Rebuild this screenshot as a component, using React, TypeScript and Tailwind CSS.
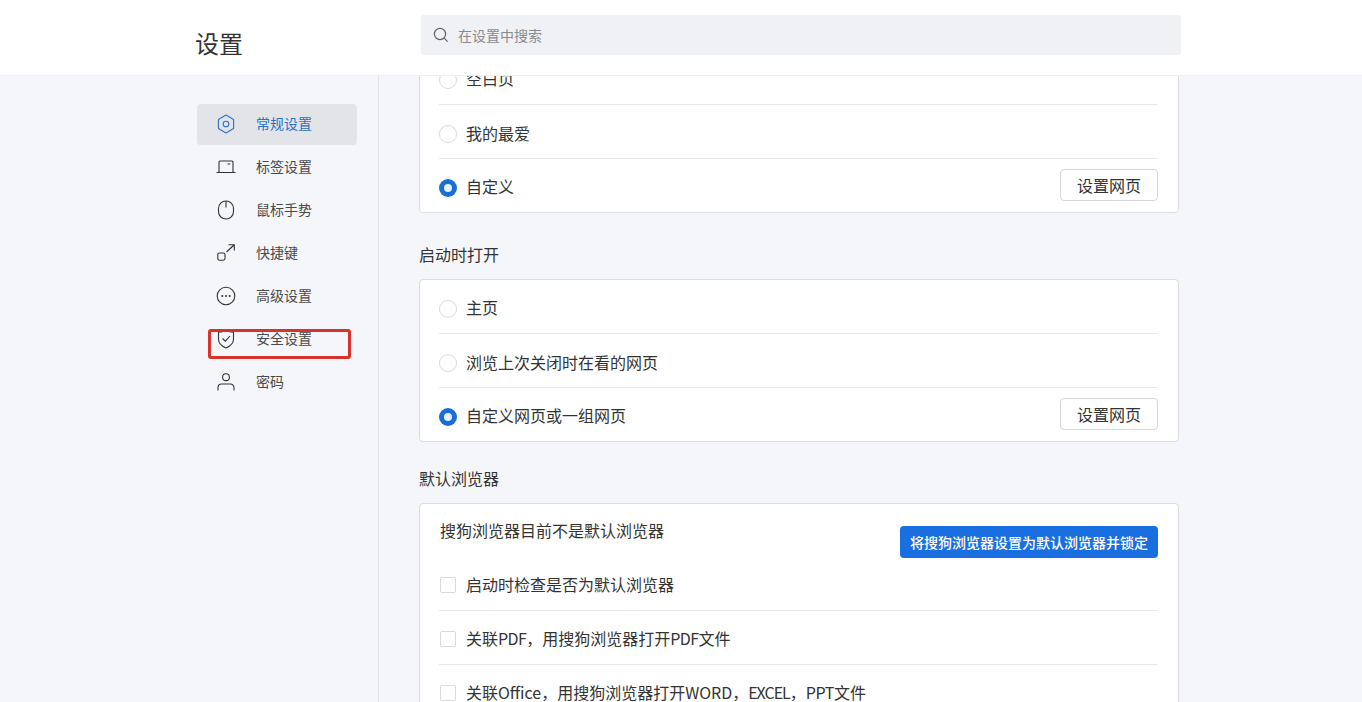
import React from "react";

const font = { fontFamily: '"Noto Sans CJK SC", "Noto Sans", sans-serif' };

const S = "currentColor";
const icons: Record<string, React.ReactNode> = {
  general: (
    <>
      <path d="M10 1 17.6 5.5V14.5L10 19 2.4 14.5V5.5Z" fill="none" stroke={S} strokeWidth="1.1" strokeLinejoin="round" />
      <circle cx="10" cy="10" r="2.8" fill="none" stroke={S} strokeWidth="1.1" />
    </>
  ),
  tabs: (
    <>
      <path d="M3 15.5V5a1 1 0 0 1 1-1h12a1 1 0 0 1 1 1v10.5" fill="none" stroke={S} strokeWidth="1.1" />
      <path d="M0.5 15.5h19M11.5 7h2.8" fill="none" stroke={S} strokeWidth="1.1" />
    </>
  ),
  mouse: (
    <>
      <rect x="2.5" y="1" width="15" height="18" rx="7.5" fill="none" stroke={S} strokeWidth="1.1" />
      <path d="M10 1V7.5" fill="none" stroke={S} strokeWidth="1.1" />
    </>
  ),
  shortcut: (
    <>
      <rect x="1.8" y="10" width="7.2" height="7.2" rx="1.6" fill="none" stroke={S} strokeWidth="1.1" />
      <path d="M10.5 9 18 2M12.5 1.7H18.3V7.5" fill="none" stroke={S} strokeWidth="1.1" />
    </>
  ),
  advanced: (
    <>
      <circle cx="10" cy="10" r="8.8" fill="none" stroke={S} strokeWidth="1.1" />
      <circle cx="6.3" cy="10" r="1" fill={S} />
      <circle cx="10" cy="10" r="1" fill={S} />
      <circle cx="13.7" cy="10" r="1" fill={S} />
    </>
  ),
  security: (
    <>
      <path d="M10 1C12.5 2.6 15 3.2 17.5 3.3V10c0 4.2-3.2 7.2-7.5 9C5.7 17.2 2.5 14.2 2.5 10V3.3C5 3.2 7.5 2.6 10 1Z" fill="none" stroke={S} strokeWidth="1.1" strokeLinejoin="round" />
      <path d="M6.5 9.5 9.3 12.2 14 7" fill="none" stroke={S} strokeWidth="1.1" />
    </>
  ),
  password: (
    <>
      <circle cx="10" cy="5.2" r="3.4" fill="none" stroke={S} strokeWidth="1.1" />
      <path d="M2 18.5v-3a3.5 3.5 0 0 1 3.5-3.5h9a3.5 3.5 0 0 1 3.5 3.5v3" fill="none" stroke={S} strokeWidth="1.1" />
    </>
  ),
};

const nav = [
  ["general", "常规设置"],
  ["tabs", "标签设置"],
  ["mouse", "鼠标手势"],
  ["shortcut", "快捷键"],
  ["advanced", "高级设置"],
  ["security", "安全设置"],
  ["password", "密码"],
];

function Radio({ checked }: { checked?: boolean }) {
  return checked ? (
    <span className="w-[18px] h-[18px] mt-[2px] rounded-full bg-[#1a6dd8] flex items-center justify-center shrink-0">
      <span className="w-[8px] h-[8px] rounded-full bg-[#e4f1fd]" />
    </span>
  ) : (
    <span className="w-[18px] h-[18px] mt-[2px] rounded-full border border-[#d9dade] bg-white shrink-0" />
  );
}

function SetBtn() {
  return (
    <button className="ml-auto mb-[3px] w-[98px] h-[32px] border border-[#d5d6da] rounded-[4px] bg-white text-[16px] text-[#333333] flex items-center justify-center">
      设置网页
    </button>
  );
}

function Row({ label, checked, btn, last, up }: { label: string; checked?: boolean; btn?: boolean; last?: boolean; up?: boolean }) {
  return (
    <div className={`flex items-center gap-[9px] pt-[2px] ${last ? "h-[53px]" : "h-[54px] border-b border-[#e8e9ec]"}`}>
      <Radio checked={checked} />
      <span className={`text-[16px] text-[#333333] ${up ? "mb-[2px]" : ""}`}>{label}</span>
      {btn && <SetBtn />}
    </div>
  );
}

function CheckRow({ children, last, first }: { children: React.ReactNode; last?: boolean; first?: boolean }) {
  return (
    <div className={`flex items-center gap-[10px] shrink-0 ${first ? "h-[53px]" : "h-[54px]"} ${last ? "" : "border-b border-[#e8e9ec]"}`}>
      <span className="w-[16px] h-[16px] ml-px mt-[2px] rounded-[2px] border border-[#d9dade] bg-white shrink-0" />
      <span className="text-[16px] text-[#333333] whitespace-nowrap">{children}</span>
    </div>
  );
}

const card = "bg-white border border-[#dcdde1] rounded-[4px] pl-[19px] pr-[20px]";

export default function App() {
  return (
    <div className="w-[1362px] h-[702px] overflow-hidden flex flex-col bg-[#f5f6fa]" style={font}>
      <header className="h-[76px] shrink-0 bg-white border-b border-[#eeeff2] flex relative z-10">
        <div className="w-[379px] shrink-0 pl-[195px] pt-[25px] text-[24px] leading-[36px] text-[#333333]">设置</div>
        <div className="ml-[42px] mt-[15px] w-[760px] h-[40px] rounded-[3px] bg-[#f0f1f5] flex items-center pl-[12px] text-[14px] text-[#888a8e]">
          <svg width="16" height="16" viewBox="0 0 16 16" fill="none" stroke="#5f6165" strokeWidth="1.2" className="mr-[9px]">
            <circle cx="7" cy="7" r="5.6" />
            <path d="M11.2 11.2 14.6 14.6" />
          </svg>
          在设置中搜索
        </div>
      </header>

      <div className="flex-1 min-h-0 flex">
        <aside className="w-[379px] shrink-0 border-r border-[#e3e4e8] pl-[197px] pt-[28px] relative">
          <nav className="w-[160px] flex flex-col gap-[2px]">
            {nav.map(([id, label], i) => (
              <div
                key={id}
                className={`h-[41px] flex items-center pl-[19px] pb-[2px] rounded-[4px] text-[14px] ${
                  i === 0 ? "bg-[#e3e4e7] text-[#2a72c8]" : "text-[#4a4a4a]"
                }`}
              >
                <svg width="20" height="20" viewBox="0 0 20 20" className={`mr-[20px] shrink-0 ${i === 0 ? "text-[#2f72c4]" : "text-[#333333]"}`}>
                  {icons[id]}
                </svg>
                {label}
              </div>
            ))}
          </nav>
          <div className="absolute left-[208px] top-[253px] w-[143px] h-[30px] border-[3px] border-[#d8322c] rounded-[3px]" />
        </aside>

        <main className="flex-1 min-w-0 overflow-hidden pl-[40px]">
          <div className="w-[760px] -mt-[26px]">
            <section className={card}>
              <Row up label="空白页" />
              <Row label="我的最爱" />
              <Row up label="自定义" checked btn last />
            </section>
            <h2 className="h-[66px] pt-[29px] text-[16px] leading-[24px] font-normal text-[#333333]">启动时打开</h2>
            <section className={card}>
              <Row up label="主页" />
              <Row label="浏览上次关闭时在看的网页" />
              <Row up label="自定义网页或一组网页" checked btn last />
            </section>
            <h2 className="h-[61px] pt-[24px] text-[16px] leading-[24px] font-normal text-[#333333]">默认浏览器</h2>
            <section className={`${card} h-[300px]`}>
              <div className="flex justify-between pt-[13px] h-[54px]">
                <span className="ml-px text-[16px] leading-[26px] text-[#333333]">搜狗浏览器目前不是默认浏览器</span>
                <button className="mt-[9px] w-[258px] h-[32px] rounded-[4px] bg-[#1a6fe0] text-white text-[14px] font-medium flex items-center justify-center">
                  将搜狗浏览器设置为默认浏览器并锁定
                </button>
              </div>
              <CheckRow first>启动时检查是否为默认浏览器</CheckRow>
              <CheckRow>
                关联<span className="tracking-[-0.6px]">PDF</span>，用搜狗浏览器打开<span className="tracking-[-0.6px]">PDF</span>文件
              </CheckRow>
              <CheckRow last>
                关联Office，用搜狗浏览器打开WORD，<span className="tracking-[-1px]">EXCEL</span>，<span className="tracking-[-0.4px]">PPT</span>文件
              </CheckRow>
            </section>
          </div>
        </main>
      </div>
    </div>
  );
}
